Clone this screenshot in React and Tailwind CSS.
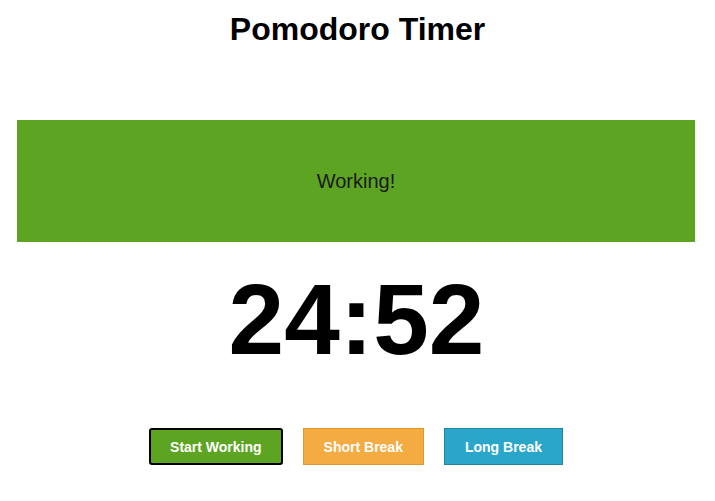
export default function App() {
  return (
    <div className="w-[715px] h-[501px] bg-white flex flex-col" style={{ fontFamily: '"Liberation Sans", Arial, sans-serif' }}>
      <h1 className="mt-[11px] text-center text-[32px] leading-[37px] font-bold text-black">Pomodoro Timer</h1>
      <div className="mt-[72px] ml-[17px] w-[678px] h-[122px] bg-[#5da423] flex items-center justify-center">
        <span className="text-[20px] leading-[24px] text-[#1a1a1a]">Working!</span>
      </div>
      <div className="mt-[21px] text-center text-[100px] leading-[112px] font-bold text-black pr-[2px]">24:52</div>
      <div className="mt-[53px] flex justify-center gap-5 pr-[3px]">
        <button className="h-[37px] px-[19px] border-2 border-black rounded-[3px] bg-[#5da423] text-white text-[14px] leading-[16px] font-bold">Start Working</button>
        <button className="h-[37px] px-5 border border-[#e0972f] bg-[#f3ab42] text-white text-[14px] leading-[16px] font-bold">Short Break</button>
        <button className="h-[37px] px-5 border border-[#2284a1] bg-[#2ba6cb] text-white text-[14px] leading-[16px] font-bold">Long Break</button>
      </div>
    </div>
  );
}
